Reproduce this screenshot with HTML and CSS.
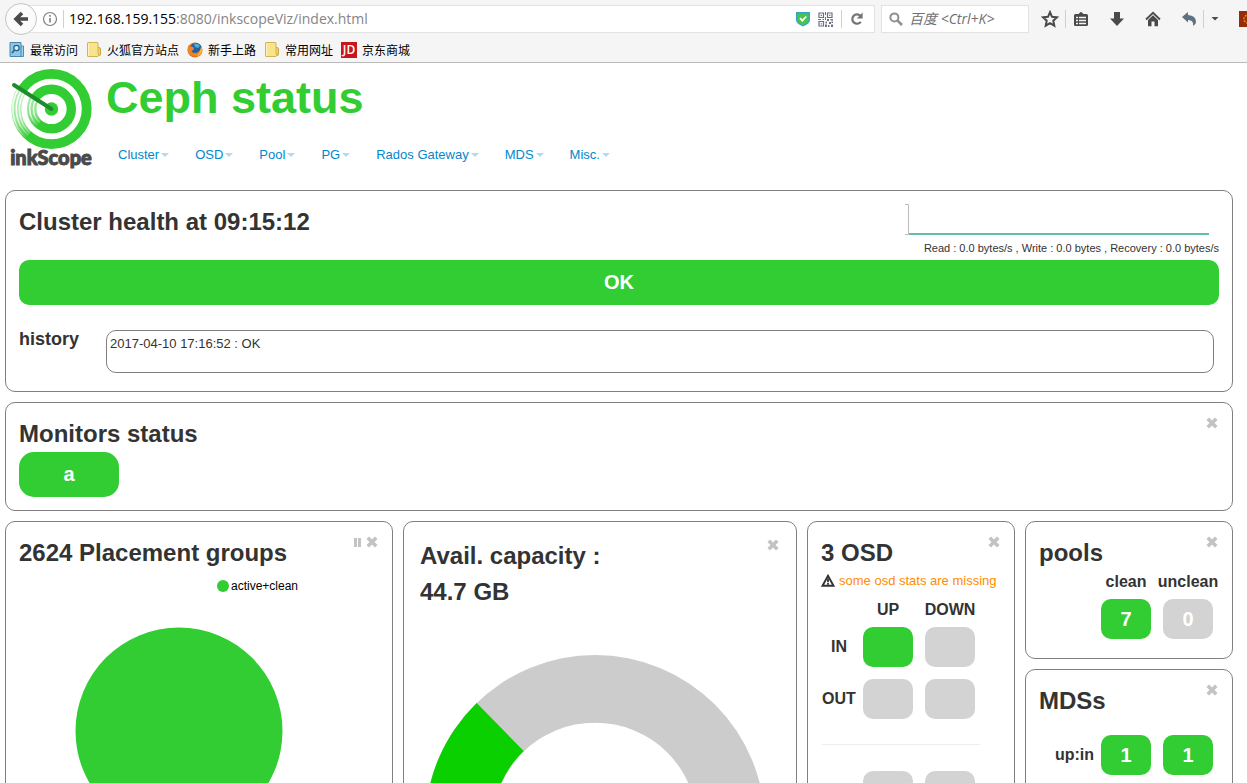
FILE: index.html
```html
<!DOCTYPE html>
<html lang="en">
<head>
<meta charset="utf-8">
<title>Ceph status</title>
<link rel="stylesheet" href="styles.css">
</head>
<body>
<svg class="defs" aria-hidden="true">
  <symbol id="close" viewBox="0 0 12 12"><path d="M3 3L9 9M9 3L3 9" stroke="currentColor" stroke-width="3.6" stroke-linecap="square"/></symbol>
  <symbol id="folder" viewBox="0 0 16 16"><path d="M10 5.500h3q1.500 0 1.500 1.500v5q0 1.500-1.500 1.500h-3z" fill="#f0d468" stroke="#c9a845"/><path d="M1.500 1q0-.5.5-.5h9.500q.5 0 .5.5v10q0 1 .8 2l-.8 1.500H2q-.5 0-.5-.5z" fill="#f8e48c" stroke="#d2b455"/><path d="M2.500 1.500v12" stroke="#fff4c0"/></symbol>
</svg>
<header class="browser">
  <div class="toolbar">
    <button class="back" aria-label="Back"><svg width="16" height="16" viewBox="0 0 16 16"><path d="M15 8H4M9 2L3 8l6 6" fill="none" stroke="#4a4a4a" stroke-width="3.600"/></svg></button>
    <div class="location">
      <button class="icon" aria-label="Site information"><svg width="16" height="16" viewBox="0 0 16 16"><circle cx="8" cy="8" r="6.500" fill="none" stroke="#808080" stroke-width="1.200"/><path d="M8 7v4.500M8 4v1.700" stroke="#808080" stroke-width="1.600"/></svg></button>
      <span class="sep"></span>
      <div class="url" role="textbox" aria-label="Address" contenteditable="true" spellcheck="false"><span class="host">192.168.159.155</span>:8080/inkscopeViz/index.html</div>
      <button class="icon shield" aria-label="Site security"><svg width="16" height="16" viewBox="0 0 16 16"><path d="M1 1h14v8q0 3.500-7 6.500Q1 12.500 1 9z" fill="#35a8c8"/><path d="M2.500 3h11v6q0 2.500-5.500 5-5.500-2.500-5.500-5z" fill="#4fc24c"/><path d="M5 7.200l2.300 2.400L11.200 5.500" fill="none" stroke="#fff" stroke-width="1.800"/></svg></button>
      <button class="icon qr" aria-label="QR code"><svg width="15" height="15" viewBox="0 0 15 15"><path d="M1 1h4.500v4.500H1zM9.500 1H14v4.500H9.500zM1 9.500h4.500V14H1z" fill="none" stroke="#687080" stroke-width="1.200"/><path d="M2.700 2.700h1.200v1.200H2.700zM11.200 2.700h1.200v1.200h-1.200zM2.700 11.200h1.200v1.200H2.700zM7 0h1v3H7zM7 5h1v3H7zM0 7h3v1H0zM4.500 7H6v1H4.500zM9 7h2v2H9zM12.500 7H15v1.500h-2.500zM7.500 9.500H9v2H7.500zM11 10h2v2h-2zM13.500 9.500H15V11h-1.500zM7 12.500h2V15H7zM10 13h1.500v2H10zM13 12.500h2V15h-2z" fill="#687080"/></svg></button>
      <span class="sep"></span>
      <button class="icon reload" aria-label="Reload"><svg width="14" height="14" viewBox="0 0 14 14"><path d="M10.800 9.800A4.700 4.700 0 1 1 10.300 3.700" fill="none" stroke="#737373" stroke-width="2.200"/><path d="M12.600.5v6H6.700z" fill="#737373"/></svg></button>
    </div>
    <label class="search">
      <svg width="14" height="14" viewBox="0 0 14 14"><circle cx="5.400" cy="5.400" r="4" fill="none" stroke="#909090" stroke-width="2"/><path d="M8.300 8.300L13 13" stroke="#909090" stroke-width="2.600"/></svg>
      <input type="text" placeholder="百度 &lt;Ctrl+K&gt;" aria-label="Search">
    </label>
    <button class="icon star" aria-label="Bookmark"><svg width="18" height="18" viewBox="0 0 18 18"><path d="M9 2.200l2 4.600 5 .5-3.700 3.400 1 5L9 13.100l-4.300 2.600 1-5L2 7.300l5-.5z" fill="none" stroke="#4a4a4a" stroke-width="2"/></svg></button>
    <span class="sep"></span>
    <button class="icon list" aria-label="Bookmark list"><svg width="16" height="16" viewBox="0 0 16 16"><path d="M2.500 3H5.500L8 .8 10.500 3h3q1.500 0 1.500 1.500v9q0 1.500-1.500 1.500h-11Q1 15 1 13.500v-9Q1 3 2.500 3z" fill="#4a4a4a"/><path d="M3 6.500h2M6 6.500h7M3 9.500h2M6 9.500h7M3 12.500h2M6 12.500h7" stroke="#f5f5f5" stroke-width="1.300"/></svg></button>
    <button class="icon" aria-label="Downloads"><svg width="16" height="16" viewBox="0 0 16 16"><path d="M5 1h6v6.500h4L8 15 1 7.500h4z" fill="#4a4a4a"/></svg></button>
    <button class="icon" aria-label="Home"><svg width="16" height="16" viewBox="0 0 16 16"><path d="M1 8.500L8 1.800l7 6.700" fill="none" stroke="#4a4a4a" stroke-width="1.800"/><path d="M3 9l5-4.700L13 9v6.200H9.500V10.500h-3v4.700H3z" fill="#4a4a4a"/></svg></button>
    <button class="icon" aria-label="Undo"><svg width="16" height="16" viewBox="0 0 16 16"><path d="M1 6L7 1v3q8 .5 8 7 0 2.500-3 4 1-6-5-6v2.500z" fill="#5f707f"/></svg></button>
    <span class="sep"></span>
    <button class="icon more" aria-label="More"><svg width="8" height="16" viewBox="0 0 8 16"><path d="M.5 6h7L4 9.500z" fill="#4a4a4a"/></svg></button>
    <button class="icon addon" aria-label="Add-on"><svg width="16" height="16" viewBox="0 0 16 16"><path d="M0 0h16v16H0z" fill="#982b08"/><circle cx="9" cy="8" r="4" fill="none" stroke="#d38a22" stroke-width="1.500" stroke-dasharray="2 1"/></svg></button>
  </div>
  <nav class="bookmarks" aria-label="Bookmarks">
    <a href="#"><svg width="16" height="16" viewBox="0 0 16 16"><path d="M11 4h3.500v10.500H11z" fill="#9ed0ea" stroke="#4d8eb4"/><path d="M1 .5h11v14H1z" fill="#8ec8e8" stroke="#4488b2"/><circle cx="7.500" cy="6" r="2.700" fill="#d4effb" stroke="#315f86" stroke-width="1.300"/><path d="M5.500 8L3 11" stroke="#315f86" stroke-width="1.800"/></svg>最常访问</a>
    <a href="#"><svg width="16" height="16"><use href="#folder"/></svg>火狐官方站点</a>
    <a href="#"><svg width="16" height="16" viewBox="0 0 16 16"><circle cx="8" cy="8" r="7.500" fill="#e66b19"/><circle cx="9" cy="6.500" r="5.600" fill="#245fa5"/><path d="M7 2q4-1 6 2l-2 2-3-1z" fill="#47aede"/><path d="M1 3q1 2 3 1.500l3 1-.5 2.500-2 .8q1 3 5 2 3-.8 4.500-5 .8 8-6.500 8.500Q1 14 .7 8z" fill="#ee8424"/><path d="M14 4q2 4 0 7-2 3.500-5 4 5-4 5-11z" fill="#f8c832"/></svg>新手上路</a>
    <a href="#"><svg width="16" height="16"><use href="#folder"/></svg>常用网址</a>
    <a href="#"><span class="jd">JD</span>京东商城</a>
  </nav>
</header>

<div class="masthead">
  <svg class="logo" width="86" height="106" viewBox="0 0 86 106" role="img" aria-label="inkScope">
    <linearGradient id="fade" gradientUnits="userSpaceOnUse" x1="0" y1="30" x2="10" y2="74">
      <stop offset="0" stop-color="#fff"/><stop offset=".5" stop-color="#fff" stop-opacity=".8"/><stop offset="1" stop-color="#fff" stop-opacity="0"/>
    </linearGradient>
    <linearGradient id="fade-inner" gradientUnits="userSpaceOnUse" x1="20" y1="34" x2="28" y2="60">
      <stop offset="0" stop-color="#fff"/><stop offset=".5" stop-color="#fff" stop-opacity=".8"/><stop offset="1" stop-color="#fff" stop-opacity="0"/>
    </linearGradient>
    <g fill="none" stroke="#32cd32">
      <circle cx="43.500" cy="42" r="35.200" stroke-width="9.800"/>
      <circle cx="43.500" cy="42" r="19.800" stroke-width="9.400"/>
    </g>
    <g fill="none" stroke="url(#fade)">
      <path d="M13.800 23A35.200 35.200 0 0 0 20 68.200" stroke-width="10.400" opacity=".65"/>
      <path d="M10.900 21.200A38.600 38.600 0 0 0 18 71" stroke-width="1.500"/>
      <path d="M13.800 23A35.200 35.200 0 0 0 20 68.200" stroke-width="1.700"/>
      <path d="M16.500 24.800A32 32 0 0 0 22 66" stroke-width="1.700"/>
    </g>
    <g fill="none" stroke="url(#fade-inner)">
      <path d="M26.800 31.400A19.800 19.800 0 0 0 30.500 57" stroke-width="10" opacity=".55"/>
      <path d="M25.100 30.200A21.800 21.800 0 0 0 29.500 58.500" stroke-width="1.400"/>
      <path d="M28.300 32.300A18 18 0 0 0 31.800 55.700" stroke-width="1.400"/>
    </g>
    <circle cx="43.500" cy="42" r="6.700" fill="#32cd32"/>
    <path d="M6 18L43.500 42" stroke="#1d8c2c" stroke-width="4" stroke-linecap="round"/>
    <text class="logo-text" x="43" y="98" text-anchor="middle">inkScope</text>
  </svg>
  <div class="masthead-main">
    <h1>Ceph status</h1>
    <nav class="menu" aria-label="Main">
      <a href="#">Cluster</a><a href="#">OSD</a><a href="#">Pool</a><a href="#">PG</a><a href="#">Rados Gateway</a><a href="#">MDS</a><a href="#">Misc.</a>
    </nav>
  </div>
</div>

<main class="dashboard">
  <section class="panel">
    <div class="health-head">
      <h2>Cluster health at 09:15:12</h2>
      <div class="traffic">
        <svg width="304" height="36" viewBox="0 0 304 36" role="img" aria-label="Throughput"><path d="M0 .5h3.500v30H0" fill="none" stroke="#bbb" stroke-width="1"/><path d="M4 30h300" stroke="#66bbaa" stroke-width="2"/></svg>
        <p>Read : 0.0 bytes/s , Write : 0.0 bytes , Recovery : 0.0 bytes/s</p>
      </div>
    </div>
    <div class="status-bar">OK</div>
    <div class="history">
      <h3>history</h3>
      <div class="history-log">2017-04-10 17:16:52 : OK</div>
    </div>
  </section>

  <section class="panel">
    <div class="tools"><button aria-label="Close"><svg width="12" height="12"><use href="#close"/></svg></button></div>
    <h2>Monitors status</h2>
    <div class="monitor">a</div>
  </section>

  <div class="columns">
    <section class="panel">
      <div class="tools">
        <button aria-label="Pause"><svg width="12" height="12" viewBox="0 0 12 12"><path d="M2 2h3v9H2zM6 2h3v9H6z" fill="currentColor"/></svg></button>
        <button aria-label="Close"><svg width="12" height="12"><use href="#close"/></svg></button>
      </div>
      <h2>2624 Placement groups</h2>
      <svg class="chart" width="360" height="300" viewBox="0 0 360 300" role="img" aria-label="Placement groups">
        <circle cx="204" cy="15" r="6" fill="#32cd32"/><text x="212" y="19">active+clean</text>
        <circle cx="160" cy="160" r="103.500" fill="#32cd32"/>
      </svg>
    </section>

    <section class="panel roomy">
      <div class="tools"><button aria-label="Close"><svg width="12" height="12"><use href="#close"/></svg></button></div>
      <h2>Avail. capacity :<br>44.7 GB</h2>
      <svg class="chart" width="360" height="300" viewBox="0 0 360 300" role="img" aria-label="Available capacity">
        <path d="M54.800 335.200A170 170 0 1 1 295.200 335.200L247.300 287.300A102.300 102.300 0 1 0 102.700 287.300z" fill="#ccc"/>
        <path d="M54.800 335.200A170 170 0 0 1 56.700 93L103.700 141A102.300 102.300 0 0 0 102.700 287.300z" fill="#0bd000"/>
      </svg>
    </section>

    <section class="panel">
      <div class="tools"><button aria-label="Close"><svg width="12" height="12"><use href="#close"/></svg></button></div>
      <h2>3 OSD</h2>
      <p class="warning"><svg width="14" height="14" viewBox="0 0 14 14"><path d="M7 1.800L12.500 11.800H1.500z" fill="none" stroke="#333" stroke-width="1.900"/><path d="M7 4.500v3.700M7 9v1.800" stroke="#333" stroke-width="1.800"/></svg>some osd stats are missing</p>
      <table class="grid osd">
        <thead><tr><td></td><th scope="col">UP</th><th scope="col">DOWN</th></tr></thead>
        <tbody>
          <tr><th scope="row">IN</th><td><span class="cell on"></span></td><td><span class="cell"></span></td></tr>
          <tr><th scope="row">OUT</th><td><span class="cell"></span></td><td><span class="cell"></span></td></tr>
        </tbody>
      </table>
      <hr>
      <table class="grid osd-more">
        <tbody><tr><td></td><td><span class="cell"></span></td><td><span class="cell"></span></td></tr></tbody>
      </table>
    </section>

    <div class="stack">
      <section class="panel">
        <div class="tools"><button aria-label="Close"><svg width="12" height="12"><use href="#close"/></svg></button></div>
        <h2>pools</h2>
        <table class="grid wide">
          <thead><tr><td></td><th scope="col">clean</th><th scope="col">unclean</th></tr></thead>
          <tbody><tr><td></td><td><span class="cell on">7</span></td><td><span class="cell">0</span></td></tr></tbody>
        </table>
      </section>
      <section class="panel mds">
        <div class="tools"><button aria-label="Close"><svg width="12" height="12"><use href="#close"/></svg></button></div>
        <h2>MDSs</h2>
        <table class="grid wide">
          <tbody><tr><th scope="row">up:in</th><td><span class="cell on">1</span></td><td><span class="cell on">1</span></td></tr></tbody>
        </table>
      </section>
    </div>
  </div>
</main>
</body>
</html>
```
FILE: styles.css
```css
* { box-sizing: border-box; }

body {
  margin: 0;
  height: 100vh;
  overflow: hidden;
  background: #fff;
  color: #333;
  font: 13px/20px "Liberation Sans", Arial, sans-serif;
}

h1, h2, h3, p { margin: 0; }
a { text-decoration: none; }
svg { display: block; flex: none; }
button { padding: 0; border: 0; background: none; color: inherit; flex: none; }
.defs { position: absolute; width: 0; height: 0; }

/* Browser bars */
.browser {
  background: #f5f5f5;
  border-bottom: 1px solid #bbb;
  overflow: hidden;
}
.toolbar {
  display: flex;
  align-items: center;
  height: 38px;
  padding-left: 5px;
}
.back {
  position: relative;
  display: grid;
  place-items: center;
  width: 32px;
  height: 32px;
  border: 1px solid #c4c4c4;
  border-radius: 50%;
  background: #fbfbfb;
}
.location, .search {
  display: flex;
  align-items: center;
  height: 28px;
  border: 1px solid #e2e2e2;
  background: #fff;
}
.location {
  flex: 1;
  min-width: 0;
  margin-left: -14px;
  padding: 0 10px 0 18px;
}
.sep {
  flex: none;
  width: 1px;
  height: 18px;
  margin: 0 6px;
  background: #d0d0d0;
}
.location .sep { margin: 0 5px; }
.url {
  flex: 1;
  min-width: 0;
  overflow: hidden;
  white-space: nowrap;
  color: #858585;
  font: 14px/20px "Open Sans", "Noto Sans", sans-serif;
}
.host { color: #000; }
.qr { margin: 0 3px 0 7px; }
.reload { margin-left: 3px; }
.search {
  width: 148px;
  margin-left: 6px;
  padding: 0 7px;
  gap: 6px;
}
.search input {
  width: 100%;
  min-width: 0;
  padding: 0;
  border: 0;
  outline: 0;
  background: none;
  font: italic 14px/20px "Open Sans", "Noto Sans CJK SC", sans-serif;
}
.search input::placeholder { color: #707070; opacity: 1; }
.toolbar > .icon { margin-left: 20px; }
.toolbar > .star { margin-left: 12px; }
.toolbar > .list { margin-left: 1px; }
.toolbar > .more { margin-left: 1px; }
.toolbar > .addon { margin-right: -8px; }

.bookmarks {
  display: flex;
  align-items: center;
  gap: 8px;
  height: 24px;
  padding-left: 9px;
}
.bookmarks a {
  display: flex;
  align-items: center;
  gap: 5px;
  color: #000;
  font: 12px/20px "Noto Sans CJK SC", sans-serif;
}
.jd {
  width: 16px;
  height: 16px;
  background: #c8161d;
  color: #fff;
  font: 600 12px/16px "Open Sans", sans-serif;
  text-align: center;
}

/* Page header */
.masthead {
  display: flex;
  gap: 12px;
  padding: 4px 8px 17px;
}
.logo { overflow: visible; }
.logo-text {
  fill: #4a4a4a;
  stroke: #4a4a4a;
  stroke-width: 1px;
  font: 900 20px Lato, sans-serif;
}
h1 {
  color: #32cd32;
  font-size: 45px;
  line-height: 62px;
}
.menu {
  display: flex;
  gap: 26px;
  padding: 16px 0 0 12px;
}
.menu a {
  display: flex;
  align-items: center;
  gap: 2px;
  color: #08c;
}
.menu a::after {
  content: "";
  border: 4px solid transparent;
  border-top-color: #b3dbf0;
  border-bottom: 0;
}

/* Dashboard */
.dashboard {
  display: flex;
  flex-direction: column;
  gap: 10px;
  padding: 0 14px 10px 5px;
}
.panel {
  position: relative;
  min-width: 0;
  padding: 13px;
  border: 1px solid #808080;
  border-radius: 10px;
}
.panel.roomy { padding: 16px; }
h2 { font-size: 24px; line-height: 36px; }
.tools {
  position: absolute;
  top: 14px;
  right: 14px;
  display: flex;
  gap: 2px;
  color: #c3c3c3;
}
.roomy .tools { top: 17px; right: 17px; }

.health-head { display: flex; justify-content: space-between; }
.traffic p { font-size: 11px; line-height: 16px; text-align: right; }
.traffic svg { margin-right: 10px; margin-left: -18px; }
.status-bar, .monitor {
  background: #32cd32;
  color: #fff;
  font-size: 20px;
  font-weight: bold;
  line-height: 45px;
  text-align: center;
}
.status-bar { margin-top: 4px; border-radius: 10px; }
.monitor { width: 100px; border-radius: 15px; }
.history {
  display: flex;
  gap: 27px;
  padding: 25px 5px 5px 0;
}
h3 { font-size: 18px; line-height: 18px; }
.history-log {
  flex: 1;
  min-height: 43px;
  padding: 3px;
  border: 1px solid #808080;
  border-radius: 10px;
}

.columns {
  display: grid;
  grid-template-columns: minmax(0, 388fr) minmax(0, 394fr) 208px 208px;
  gap: 10px;
}
.stack { display: flex; flex-direction: column; gap: 10px; }
.chart { max-width: 100%; font-size: 12px; }

.warning {
  display: flex;
  align-items: center;
  gap: 4px;
  color: #ff8c00;
  white-space: nowrap;
}

.grid {
  table-layout: fixed;
  border-collapse: collapse;
  font-size: 16px;
  line-height: 22px;
}
.grid th, .grid td { width: 62px; padding: 0; }
.grid td { padding: 0 6px; }
.grid tr > :first-child { width: 36px; padding: 0; }
.grid.wide tr > :first-child { width: 56px; padding-right: 1px; text-align: right; }
.osd { width: 160px; margin-top: 8px; }
.osd-more { width: 160px; }
.wide { width: 180px; }
.mds .wide { margin-top: 10px; }
.cell {
  display: block;
  height: 40px;
  margin: 6px 0;
  border-radius: 10px;
  background: #d3d3d3;
  color: #fff;
  font-size: 20px;
  font-weight: bold;
  line-height: 40px;
  text-align: center;
}
.cell.on { background: #32cd32; }
hr {
  width: 158px;
  margin: 19px 0 20px 1px;
  border: 0;
  border-top: 1px solid #eee;
}
```
